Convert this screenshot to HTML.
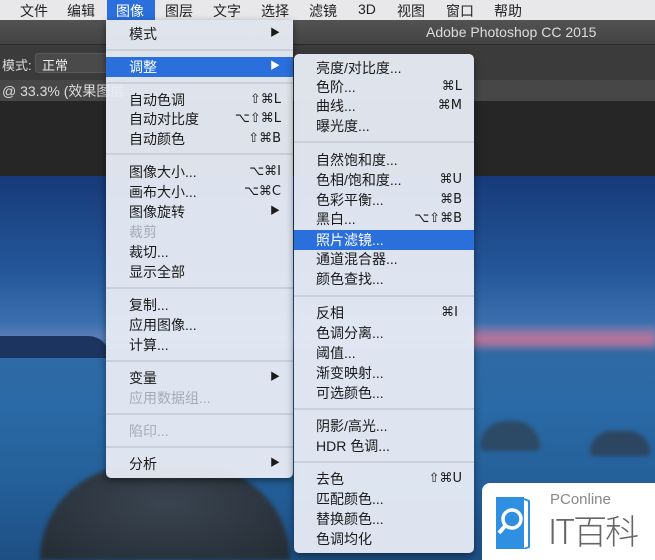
<!DOCTYPE html>
<html><head><meta charset="utf-8"><style>
*{margin:0;padding:0;box-sizing:border-box}
body{width:655px;height:560px;overflow:hidden;position:relative;background:#262626;font-family:"Liberation Sans","Noto Sans CJK SC",sans-serif;}
.abs{position:absolute}
.mb{left:0;top:0;width:655px;height:20px;background:#e8e8ea;font-size:14px;color:#222}
.mb span{position:absolute;top:1px}
.title{left:0;top:20px;width:655px;height:24px;background:linear-gradient(#525252,#444);color:#ddd;font-size:14px}
.opt{left:0;top:44px;width:655px;height:36px;background:#3b3b3b;border-top:1px solid #2a2a2a}
.tab{left:0;top:80px;width:655px;height:21px;background:#474747;color:#ddd;font-size:14px}
.photo{left:0;top:176px;width:655px;height:384px;background:linear-gradient(180deg,#173a78 0%,#24579a 25%,#3a6fae 38%,#5a7fb8 42%,#2f6aa5 46%,#2a6aa6 60%,#245f99 80%,#1e4f84 100%)}
.menu{background:rgba(232,236,244,0.95);border-radius:0 0 5px 5px;box-shadow:0 3px 8px rgba(0,0,0,.45);font-size:14px;color:#1a1a1a}
.it{position:absolute;left:0;right:0;height:20px;line-height:20px}
.it .t{position:absolute}
.it .k{position:absolute;text-align:right;font-family:"DejaVu Sans",sans-serif;font-size:13px}
.hl{background:#2a6fdc;color:#fff}
.dis{color:#a5acb8}
.sep{position:absolute;left:0;right:0;height:2px;background:rgba(200,205,215,.9)}
.arr{position:absolute;font-size:10px}
</style></head><body>
<div class="abs photo">
 <div class="abs" style="left:0;top:160px;width:110px;height:22px;background:#1c3460;border-radius:0 60px 0 0"></div>
 <div class="abs" style="left:470px;top:150px;width:185px;height:24px;background:linear-gradient(180deg,rgba(140,120,170,0.3),rgba(230,110,140,0.75) 60%,rgba(120,110,160,0.3));filter:blur(3px)"></div>
 <div class="abs" style="left:40px;top:290px;width:250px;height:94px;background:radial-gradient(ellipse at 50% 40%,#3a4450,#232c34);border-radius:120px 120px 0 0;filter:blur(2px)"></div>
 <div class="abs" style="left:480px;top:245px;width:60px;height:30px;background:#2c4a66;border-radius:30px 30px 5px 5px;filter:blur(2px)"></div>
 <div class="abs" style="left:590px;top:255px;width:60px;height:25px;background:#2c4560;border-radius:30px 30px 5px 5px;filter:blur(2px)"></div>
</div>
<div class="abs mb">
<span style="left:20px">文件</span><span style="left:67px">编辑</span>
<span style="left:107px;top:0;width:48px;height:20px;background:#2a6fdc;color:#fff;padding:1px 0 0 9px">图像</span>
<span style="left:165px">图层</span><span style="left:213px">文字</span><span style="left:261px">选择</span><span style="left:309px">滤镜</span><span style="left:358px">3D</span><span style="left:397px">视图</span><span style="left:446px">窗口</span><span style="left:494px">帮助</span>
</div>
<div class="abs title"><span class="abs" style="left:426px;top:4px">Adobe Photoshop CC 2015</span></div>
<div class="abs opt"><span class="abs" style="left:2px;top:10px;color:#ddd;font-size:13px">模式:</span>
<div class="abs" style="left:35px;top:8px;width:80px;height:20px;background:#4a4a4a;border:1px solid #5a5a5a;border-radius:3px;color:#eee;font-size:13px;padding:1px 6px">正常</div></div>
<div class="abs tab"><span class="abs" style="left:2px;top:1px">@ 33.3% (效果图层</span></div>

<div class="abs menu" style="left:106px;top:20px;width:187px;height:458px">
 <div class="it" style="top:4px"><span class="t" style="left:23px">模式</span><span class="arr" style="left:164px">▶</span></div>
 <div class="sep" style="top:29px"></div>
 <div class="it hl" style="top:37px"><span class="t" style="left:23px">调整</span><span class="arr" style="left:164px">▶</span></div>
 <div class="sep" style="top:62px"></div>
 <div class="it" style="top:70px"><span class="t" style="left:23px">自动色调</span><span class="k" style="right:12px">⇧⌘L</span></div>
 <div class="it" style="top:89px"><span class="t" style="left:23px">自动对比度</span><span class="k" style="right:12px">⌥⇧⌘L</span></div>
 <div class="it" style="top:109px"><span class="t" style="left:23px">自动颜色</span><span class="k" style="right:12px">⇧⌘B</span></div>
 <div class="sep" style="top:133px"></div>
 <div class="it" style="top:142px"><span class="t" style="left:23px">图像大小...</span><span class="k" style="right:12px">⌥⌘I</span></div>
 <div class="it" style="top:162px"><span class="t" style="left:23px">画布大小...</span><span class="k" style="right:12px">⌥⌘C</span></div>
 <div class="it" style="top:182px"><span class="t" style="left:23px">图像旋转</span><span class="arr" style="left:164px">▶</span></div>
 <div class="it dis" style="top:202px"><span class="t" style="left:23px">裁剪</span></div>
 <div class="it" style="top:222px"><span class="t" style="left:23px">裁切...</span></div>
 <div class="it" style="top:242px"><span class="t" style="left:23px">显示全部</span></div>
 <div class="sep" style="top:267px"></div>
 <div class="it" style="top:275px"><span class="t" style="left:23px">复制...</span></div>
 <div class="it" style="top:295px"><span class="t" style="left:23px">应用图像...</span></div>
 <div class="it" style="top:315px"><span class="t" style="left:23px">计算...</span></div>
 <div class="sep" style="top:340px"></div>
 <div class="it" style="top:348px"><span class="t" style="left:23px">变量</span><span class="arr" style="left:164px">▶</span></div>
 <div class="it dis" style="top:368px"><span class="t" style="left:23px">应用数据组...</span></div>
 <div class="sep" style="top:393px"></div>
 <div class="it dis" style="top:401px"><span class="t" style="left:23px">陷印...</span></div>
 <div class="sep" style="top:426px"></div>
 <div class="it" style="top:434px"><span class="t" style="left:23px">分析</span><span class="arr" style="left:164px">▶</span></div>
</div>

<div class="abs menu" style="left:294px;top:54px;width:180px;height:499px;border-radius:5px">
 <div class="it" style="top:4px"><span class="t" style="left:22px">亮度/对比度...</span></div>
 <div class="it" style="top:23px"><span class="t" style="left:22px">色阶...</span><span class="k" style="right:12px">⌘L</span></div>
 <div class="it" style="top:42px"><span class="t" style="left:22px">曲线...</span><span class="k" style="right:12px">⌘M</span></div>
 <div class="it" style="top:62px"><span class="t" style="left:22px">曝光度...</span></div>
 <div class="sep" style="top:87px"></div>
 <div class="it" style="top:96px"><span class="t" style="left:22px">自然饱和度...</span></div>
 <div class="it" style="top:116px"><span class="t" style="left:22px">色相/饱和度...</span><span class="k" style="right:12px">⌘U</span></div>
 <div class="it" style="top:136px"><span class="t" style="left:22px">色彩平衡...</span><span class="k" style="right:12px">⌘B</span></div>
 <div class="it" style="top:155px"><span class="t" style="left:22px">黑白...</span><span class="k" style="right:12px">⌥⇧⌘B</span></div>
 <div class="it hl" style="top:176px"><span class="t" style="left:22px">照片滤镜...</span></div>
 <div class="it" style="top:195px"><span class="t" style="left:22px">通道混合器...</span></div>
 <div class="it" style="top:215px"><span class="t" style="left:22px">颜色查找...</span></div>
 <div class="sep" style="top:241px"></div>
 <div class="it" style="top:249px"><span class="t" style="left:22px">反相</span><span class="k" style="right:16px">⌘I</span></div>
 <div class="it" style="top:269px"><span class="t" style="left:22px">色调分离...</span></div>
 <div class="it" style="top:289px"><span class="t" style="left:22px">阈值...</span></div>
 <div class="it" style="top:309px"><span class="t" style="left:22px">渐变映射...</span></div>
 <div class="it" style="top:329px"><span class="t" style="left:22px">可选颜色...</span></div>
 <div class="sep" style="top:354px"></div>
 <div class="it" style="top:362px"><span class="t" style="left:22px">阴影/高光...</span></div>
 <div class="it" style="top:382px"><span class="t" style="left:22px">HDR 色调...</span></div>
 <div class="sep" style="top:407px"></div>
 <div class="it" style="top:415px"><span class="t" style="left:22px">去色</span><span class="k" style="right:12px">⇧⌘U</span></div>
 <div class="it" style="top:435px"><span class="t" style="left:22px">匹配颜色...</span></div>
 <div class="it" style="top:455px"><span class="t" style="left:22px">替换颜色...</span></div>
 <div class="it" style="top:475px"><span class="t" style="left:22px">色调均化</span></div>
</div>

<div class="abs" style="left:482px;top:483px;width:173px;height:77px;background:#fff;border-radius:8px 0 0 0">
 <svg class="abs" style="left:14px;top:14px" width="34" height="52" viewBox="0 0 34 52">
  <rect x="0" y="0" width="28" height="52" fill="#2f8fe0"/>
  <path d="M28 2 L33 4 L33 50 L28 52" fill="none" stroke="#2f8fe0" stroke-width="2"/>
  <circle cx="16" cy="22" r="9" fill="none" stroke="#fff" stroke-width="3.5"/>
  <path d="M9 29 L3 36" stroke="#fff" stroke-width="4"/>
 </svg>
 <span class="abs" style="left:68px;top:8px;font-size:15px;color:#888">PConline</span>
 <span class="abs" style="left:66px;top:27px;font-size:34px;line-height:40px;color:#666;letter-spacing:-2px;font-family:'Noto Sans CJK SC',sans-serif;font-weight:300">IT百科</span>
</div>
</body></html>
